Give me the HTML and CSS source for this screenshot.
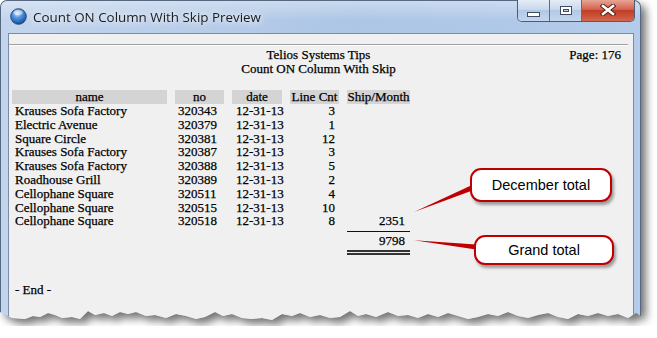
FILE: index.html
```html
<!DOCTYPE html>
<html lang="en">

<head>
    <meta charset="UTF-8">
    <title>Count ON Column With Skip Preview</title>
    <link rel="stylesheet" href="styles.css">
</head>

<body>
    <div class="shot">
        <div class="window">
            <div class="titlebar">
                <svg class="app-icon" viewBox="0 0 17 17">
                    <defs>
                        <radialGradient id="ball" cx="0.42" cy="0.3" r="0.75">
                            <stop offset="0" stop-color="#d6ecff"/>
                            <stop offset="0.35" stop-color="#5d9ae0"/>
                            <stop offset="0.8" stop-color="#1f5fb4"/>
                            <stop offset="1" stop-color="#143f80"/>
                        </radialGradient>
                    </defs>
                    <circle cx="8.5" cy="8.5" r="7.8" fill="url(#ball)" stroke="#1d3f6e" stroke-width="0.9"/>
                    <ellipse cx="8.2" cy="4.6" rx="4.6" ry="2.6" fill="#fff" opacity="0.45"/>
                </svg>
                <span class="title">Count ON Column With Skip Preview</span>
                <div class="caption-buttons">
                    <div class="cbtn min"><span class="glyph-min"></span></div>
                    <div class="cbtn max"><span class="glyph-max"></span></div>
                    <div class="cbtn close">
                        <svg class="glyph-x" viewBox="0 0 16 12">
                            <path d="M3 2 L13 10 M13 2 L3 10" stroke="#5a2018" stroke-width="4.6" stroke-linecap="square"/>
                            <path d="M3 2 L13 10 M13 2 L3 10" stroke="#fff" stroke-width="2.6" stroke-linecap="square"/>
                        </svg>
                    </div>
                </div>
            </div>

            <div class="client">
                <div class="toolbar"></div>
                <div class="report">
                    <div class="report-head">
                        <div></div>
                        <div class="report-title">Telios Systems Tips<br>Count ON Column With Skip</div>
                        <div class="page-no">Page: 176</div>
                    </div>

                    <div class="grid">
                        <div class="hd">name</div>
                        <div class="hd">no</div>
                        <div class="hd">date</div>
                        <div class="hd">Line Cnt</div>
                        <div class="hd">Ship/Month</div>

                        <div class="c-name">Krauses Sofa Factory</div>
                        <div class="c-no">320343</div>
                        <div class="c-date">12-31-13</div>
                        <div class="c-cnt">3</div>
                        <div class="c-ship"></div>

                        <div class="c-name">Electric Avenue</div>
                        <div class="c-no">320379</div>
                        <div class="c-date">12-31-13</div>
                        <div class="c-cnt">1</div>
                        <div class="c-ship"></div>

                        <div class="c-name">Square Circle</div>
                        <div class="c-no">320381</div>
                        <div class="c-date">12-31-13</div>
                        <div class="c-cnt">12</div>
                        <div class="c-ship"></div>

                        <div class="c-name">Krauses Sofa Factory</div>
                        <div class="c-no">320387</div>
                        <div class="c-date">12-31-13</div>
                        <div class="c-cnt">3</div>
                        <div class="c-ship"></div>

                        <div class="c-name">Krauses Sofa Factory</div>
                        <div class="c-no">320388</div>
                        <div class="c-date">12-31-13</div>
                        <div class="c-cnt">5</div>
                        <div class="c-ship"></div>

                        <div class="c-name">Roadhouse Grill</div>
                        <div class="c-no">320389</div>
                        <div class="c-date">12-31-13</div>
                        <div class="c-cnt">2</div>
                        <div class="c-ship"></div>

                        <div class="c-name">Cellophane Square</div>
                        <div class="c-no">320511</div>
                        <div class="c-date">12-31-13</div>
                        <div class="c-cnt">4</div>
                        <div class="c-ship"></div>

                        <div class="c-name">Cellophane Square</div>
                        <div class="c-no">320515</div>
                        <div class="c-date">12-31-13</div>
                        <div class="c-cnt">10</div>
                        <div class="c-ship"></div>

                        <div class="c-name">Cellophane Square</div>
                        <div class="c-no">320518</div>
                        <div class="c-date">12-31-13</div>
                        <div class="c-cnt">8</div>
                        <div class="c-ship">2351</div>
                    </div>

                    <div class="grid totals">
                        <div class="grand-sum">9798</div>
                    </div>

                    <div class="end">- End -</div>
                </div>
            </div>

            <!-- callout pointers + boxes -->
            <svg class="pointers" viewBox="0 0 641 326">
                <polygon points="414,212 471,185.5 471,191" fill="#c00000"/>
                <polygon points="414,240.2 476,244.6 476,249.4" fill="#c00000"/>
            </svg>
            <div class="callout december">December total</div>
            <div class="callout grand">Grand total</div>
        </div>
    </div>
</body>

</html>
```

FILE: styles.css
```css
* {
    box-sizing: border-box;
}

body {
    margin: 0;
    background-color: #ffffff;
}

.shot {
    width: 641px;
    filter: drop-shadow(5px 5px 4px rgba(0, 0, 0, 0.55));
}

.window {
    position: relative;
    width: 641px;
    height: 326px;
    display: flex;
    flex-direction: column;
    border: 1px solid #56687f;
    border-bottom: none;
    border-radius: 7px 7px 0 0;
    background: linear-gradient(to right, #c3d5ed, #adc6e6 55%, #b4cbea);
    /* torn paper bottom edge */
    clip-path: polygon(0 0, 641px 0, 641px 316px, 636px 313px, 628px 318px, 618px 314px, 608px 316px, 598px 313px,
        588px 316px, 578px 314px, 568px 319px, 558px 317px, 548px 313px, 538px 315px, 528px 318px, 518px 316px,
        508px 312px, 498px 316px, 488px 314px, 478px 317px, 468px 319px, 458px 316px, 448px 313px, 438px 317px,
        428px 314px, 418px 318px, 408px 315px, 398px 316px, 388px 312px, 376px 317px, 366px 314px, 358px 316px,
        350px 311px, 340px 317px, 330px 318px, 320px 315px, 310px 317px, 300px 313px, 292px 316px, 282px 314px,
        272px 320px, 262px 318px, 252px 319px, 242px 318px, 232px 314px, 223px 316px, 215px 312px, 205px 317px,
        196px 319px, 186px 316px, 176px 314px, 166px 318px, 155px 315px, 146px 316px, 136px 312px, 128px 314px,
        120px 312px, 112px 316px, 104px 313px, 95px 315px, 88px 311px, 80px 319px, 72px 317px, 62px 318px,
        55px 315px, 48px 313px, 40px 317px, 33px 316px, 25px 319px, 12px 318px, 0 312px);
}

/* ---------- title bar ---------- */

.titlebar {
    height: 32px;
    flex: none;
    display: flex;
    align-items: flex-start;
    border-radius: 6px 6px 0 0;
    background: linear-gradient(to bottom, rgba(255, 255, 255, 0.35), rgba(255, 255, 255, 0) 60%);
}

.app-icon {
    width: 17px;
    height: 17px;
    margin: 7px 0 0 9px;
}

.title {
    margin: 6px 0 0 6px;
    font-family: "Open Sans", "Noto Sans", sans-serif;
    font-size: 13.4px;
    line-height: 20px;
    color: #1b1b1b;
    text-shadow: 0 0 6px #ffffff, 0 0 12px rgba(255, 255, 255, 0.9);
}

.caption-buttons {
    display: flex;
    height: 22px;
    margin: -1px 5px 0 auto;
    border: 1px solid #4d5d73;
    border-top: none;
    border-radius: 0 0 5px 5px;
    overflow: hidden;
}

.cbtn {
    display: flex;
    align-items: center;
    justify-content: center;
    height: 100%;
}

.min,
.max {
    width: 32px;
    border-right: 1px solid #5c6d84;
    background: linear-gradient(to bottom, #e4ecf6, #c9d8ec 45%, #b3c8e4 50%, #c5d6ee);
}

.close {
    width: 52px;
    background: linear-gradient(to bottom, #e7a595, #d3614d 45%, #c23c26 50%, #d2664c);
}

.glyph-min {
    width: 13px;
    height: 5px;
    margin-top: 7px;
    background-color: #ffffff;
    border: 1px solid #3f4d62;
}

.glyph-max {
    width: 12px;
    height: 9px;
    margin-top: -1px;
    border: 1px solid #3f4d62;
    box-shadow: inset 0 0 0 2px #ffffff, inset 0 0 0 3px #3f4d62;
    background-color: #c5d4e8;
}

.glyph-x {
    width: 16px;
    height: 12px;
    margin-top: -1px;
}

/* ---------- client area ---------- */

.client {
    flex: 1;
    margin: 0 6px 0 7px;
    border: 1px solid #7b8da6;
    border-bottom: none;
    background-color: #f0f0f0;
    display: flex;
    flex-direction: column;
}

.toolbar {
    height: 10px;
}

.report {
    flex: 1;
    margin-right: 5px;
    padding: 3px 3px 0 3px;
    border-top: 1px solid #a0a0a0;
    box-shadow: inset 0 1px 0 #ffffff;
    font-family: "Liberation Serif", "Times New Roman", serif;
    font-size: 13px;
    line-height: 13.8px;
    color: #000000;
    white-space: nowrap;
    -webkit-text-stroke: 0.25px #000;
}

.report-head {
    display: grid;
    grid-template-columns: 1fr auto 1fr;
    line-height: 14px;
}

.report-title {
    text-align: center;
}

.page-no {
    justify-self: end;
    padding-right: 4px;
}

.grid {
    display: grid;
    grid-template-columns: 155px 49px 50px 49px 63px;
    column-gap: 8px;
}

.hd {
    margin-top: 14px;
    height: 14px;
    line-height: 14px;
    text-align: center;
    background-color: #d4d4d4;
}

.c-name {
    padding-left: 3px;
}

.c-no {
    padding-left: 3px;
}

.c-date {
    padding-left: 4px;
}

.c-cnt {
    text-align: right;
    padding-right: 4px;
}

.c-ship {
    text-align: right;
    padding-right: 5px;
}

.grand-sum {
    grid-column: 5;
    margin-top: 3px;
    padding: 2px 5px 2px 0;
    text-align: right;
    border-top: 1px solid #111111;
    border-bottom: 5px double #333333;
}

.end {
    margin-top: 28px;
    padding-left: 3px;
}

/* ---------- callouts ---------- */

.pointers {
    position: absolute;
    left: -1px;
    top: -1px;
    width: 641px;
    height: 326px;
    pointer-events: none;
}

.callout {
    position: absolute;
    display: flex;
    align-items: center;
    justify-content: center;
    background-color: #ffffff;
    border: 2px solid #c00000;
    border-radius: 11px;
    box-shadow: 2px 3px 3px rgba(0, 0, 0, 0.35);
    font-family: "Liberation Sans", Arial, sans-serif;
    font-size: 14.5px;
    color: #000000;
}

.december {
    left: 469px;
    top: 167px;
    width: 142px;
    height: 34px;
}

.grand {
    left: 473px;
    top: 234px;
    width: 140px;
    height: 30px;
}
```
